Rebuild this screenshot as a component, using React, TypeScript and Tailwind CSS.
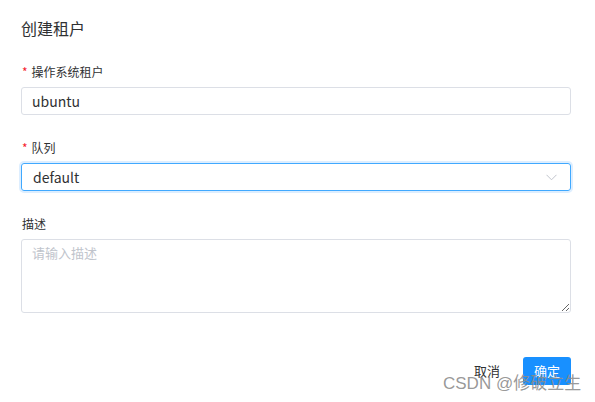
import React from "react";

const font = { fontFamily: '"Noto Sans CJK SC", "Noto Sans", sans-serif' };

export default function App() {
  return (
    <div className="relative w-[595px] h-[402px] bg-white overflow-hidden" style={font}>
      <div className="px-[21px] pt-[16px] pr-[24px]">
        <div className="text-[16px] leading-6 text-[#303133]">创建租户</div>

        <div className="mt-[22px] text-[12px] leading-5 text-[#303133] mb-[5px] flex items-center">
          <span className="text-[#f5222d] mr-[4px] ml-[1px]">*</span>操作系统租户
        </div>
        <input
          readOnly
          value="ubuntu"
          className="block w-full h-[28px] rounded-[3px] border border-[#dcdfe6] px-[10px] text-[14px] text-[#303133] outline-none"
          style={font}
        />

        <div className="mt-[23px] text-[12px] leading-5 text-[#303133] mb-[5px] flex items-center">
          <span className="text-[#f5222d] mr-[4px] ml-[1px]">*</span>队列
        </div>
        <div className="relative w-full h-[28px] rounded-[3px] border border-[#40a9ff] shadow-[0_0_0_2px_rgba(24,144,255,0.15)] flex items-center px-[11px] text-[14px] text-[#303133]">
          default
          <svg className="absolute right-[13px] top-[10px]" width="11" height="7" viewBox="0 0 11 7" fill="none">
            <path d="M0.5 0.8 L5.5 5.8 L10.5 0.8" stroke="#c0c4cc" strokeWidth="1" />
          </svg>
        </div>

        <div className="mt-[23px] text-[12px] leading-5 text-[#303133] mb-[5px] ml-[1px]">描述</div>
        <textarea
          placeholder="请输入描述"
          className="block w-full h-[74px] rounded-[3px] border border-[#dcdfe6] px-[10px] py-[3px] text-[13px] leading-5 text-[#303133] placeholder:text-[#c0c4cc] outline-none"
          style={font}
        />

        <div className="mt-[44px] flex justify-end items-center">
          <button className="h-[28px] px-[3px] text-[13px] text-[#303133] mr-[20px]">取消</button>
          <button className="h-[28px] w-[48px] rounded-[3px] bg-[#1890ff] text-white text-[13px]">确定</button>
        </div>
      </div>
      <div className="absolute left-[443px] top-[372px] text-[17px] leading-6 text-[#8c8c8c]/90 whitespace-nowrap" style={{ fontFamily: '"Liberation Sans", "Noto Sans CJK SC", sans-serif' }}>
        CSDN @修破立生
      </div>
    </div>
  );
}
